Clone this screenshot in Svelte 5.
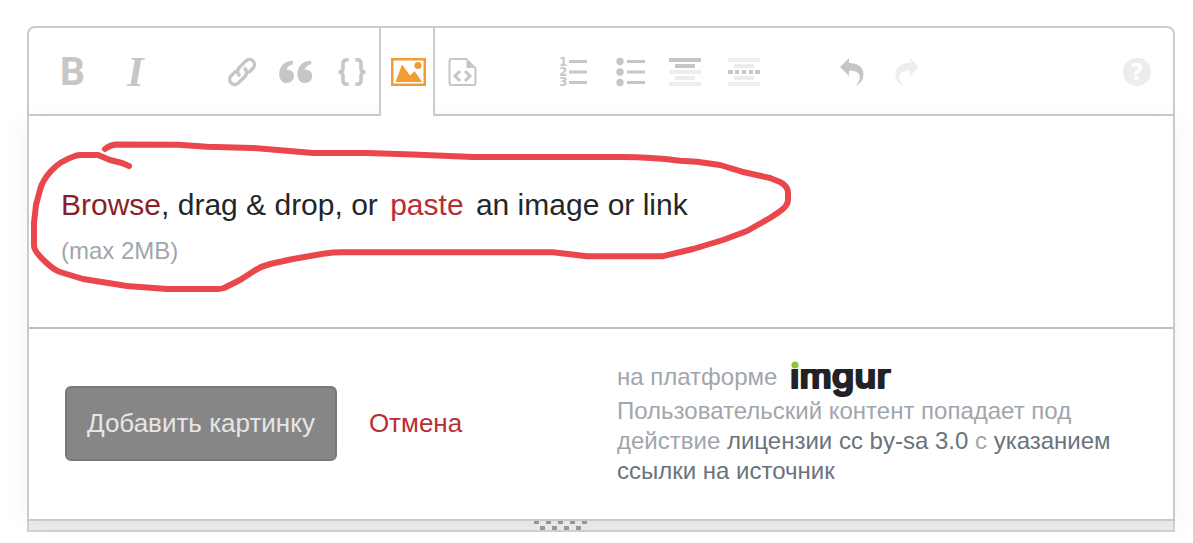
<script>
  let tab = $state('image');
  const gripTop = [0, 12, 24, 36, 48];
  const gripBottom = [6, 18, 30, 42];

  function toggle(name) {
    tab = tab === name ? '' : name;
  }
</script>

<main class="editor">
  <div class="toolbar" role="toolbar" aria-label="Форматирование">
    <div class="group text-style">
      <button aria-label="Полужирный"><span class="bold">B</span></button>
      <button aria-label="Курсив"><span class="italic">I</span></button>
    </div>

    <div class="group insert">
      <button aria-label="Ссылка">
        <svg viewBox="0 0 36 32">
          <g fill="none" stroke="currentColor" stroke-width="3.4" stroke-linecap="butt">
            <path d="M16.2 20.2C13 18 12.8 14 15.3 11.5L22 4.9c2.2-2.1 5-2.1 7 0s2 5.2 0 7.4l-4.8 4.8" />
            <path d="M20 11.8c3.2 2.2 3.4 6.2.9 8.7l-6.7 6.6c-2.2 2.1-5 2.1-7 0s-2-5.2 0-7.4l4.8-4.8" />
          </g>
        </svg>
      </button>
      <button aria-label="Цитата">
        <svg viewBox="1 0 36 32" fill="currentColor">
          <path d="M15 4.8v3.8c-3.5.3-6 2.7-6.4 5.4 4-.8 7.4 2.3 7.4 6.1 0 4-3.2 6.9-7.2 6.9-4.6 0-7.6-3.6-7.6-8.8C1.2 10.6 6.2 5 15 4.8z" />
          <path d="M33.2 4.8v3.8c-3.5.3-6 2.7-6.4 5.4 4-.8 7.4 2.3 7.4 6.1 0 4-3.2 6.9-7.2 6.9-4.6 0-7.6-3.6-7.6-8.8 0-7.6 5-13.2 13.8-13.4z" />
        </svg>
      </button>
      <button aria-label="Код">
        <svg viewBox="0 0 36 32" fill="none" stroke="currentColor" stroke-width="3.6">
          <path d="M14.500 3.800h-1.500q-4 0-4 4v4.400q0 3.800-4.500 3.800q4.500 0 4.500 3.800v4.400q0 4 4 4h1.500M21.500 3.800h1.500q4 0 4 4v4.400q0 3.800 4.500 3.800q-4.500 0-4.500 3.800v4.400q0 4-4 4h-1.500" />
        </svg>
      </button>
      <button class:active={tab === 'image'} aria-label="Изображение" onclick={() => toggle('image')}>
        <svg viewBox="0 0 36 32" fill="currentColor">
          <path fill-rule="evenodd" d="M2 2h35v28H2zM4.5 4.5v23h30v-23z" />
          <path d="M6.5 26L13 8.5l8 11 4.500-4.500 7.500 11z" />
          <circle cx="29" cy="9.5" r="3.6" />
        </svg>
      </button>
      <button aria-label="Фрагмент кода">
        <svg viewBox="0 0 36 32" fill="none" stroke="currentColor">
          <path stroke-width="2" d="M22 3H6.5q-2 0-2 2v22q0 2 2 2h22q2 0 2-2V11.5" />
          <path fill="currentColor" stroke="none" d="M21.5 2l10 10h-10z" />
          <path stroke-width="3" d="M15 15l-5 5 5 5M20 15l5 5-5 5" />
        </svg>
      </button>
    </div>

    <div class="group lists">
      <button aria-label="Нумерованный список">
        <svg viewBox="0 0 36 32" fill="currentColor">
          <g class="digits">
            <text x="3" y="10">1</text>
            <text x="3" y="20">2</text>
            <text x="3" y="30">3</text>
          </g>
          <path d="M13 4h18v3H13zM13 14.5h18v3H13zM13 25h18v3H13z" />
        </svg>
      </button>
      <button aria-label="Маркированный список">
        <svg viewBox="0 0 36 32" fill="currentColor">
          <circle cx="7" cy="5.5" r="3.7" />
          <circle cx="7" cy="16" r="3.7" />
          <circle cx="7" cy="26.5" r="3.7" />
          <path d="M14 4h18v3H14zM14 14.5h18v3H14zM14 25h18v3H14z" />
        </svg>
      </button>
      <button aria-label="Заголовок">
        <svg viewBox="3 0 36 32" fill="currentColor">
          <path d="M2 2h32v4H2zM8 8h20v4H8z" />
          <path class="faint" d="M2 14h32v4H2zM8 20h20v4H8zM2 26h32v4H2z" />
        </svg>
      </button>
      <button aria-label="Горизонтальная линия">
        <svg viewBox="1 0 36 32" fill="currentColor">
          <path d="M2 14h5v4H2zM9 14h4v4H9zM16 14h4v4h-4zM23 14h4v4h-4zM29 14h5v4h-5z" />
          <path class="faint" d="M2 2h32v4H2zM8 8h20v4H8zM8 20h20v4H8zM2 26h32v4H2z" />
        </svg>
      </button>
    </div>

    <div class="group">
      <button aria-label="Отменить">
        <svg viewBox="0 0 36 32" fill="currentColor">
          <path d="M6 11L15 2v5c9 0 14.5 4 14.5 11.5 0 5.500-3.500 10-8.500 11.500 4-3.500 5.500-7 4.500-10.500-1-3.500-4.500-5-10.500-5V20z" />
        </svg>
      </button>
      <button aria-label="Повторить" disabled>
        <svg viewBox="0 0 36 32" fill="currentColor">
          <path d="M30 11L21 2v5C12 7 6.500 11 6.500 18.500c0 5.500 3.500 10 8.500 11.500-4-3.500-5.500-7-4.500-10.500 1-3.500 4.500-5 10.500-5V20z" />
        </svg>
      </button>
    </div>

    <button class="help" aria-label="Справка">
      <svg viewBox="0 0 36 32">
        <circle cx="18" cy="16" r="14" fill="currentColor" />
        <text x="18" y="24" text-anchor="middle">?</text>
      </svg>
    </button>
  </div>

  <section class="panel">
    <div class="drop">
      <p class="lead"><a class="browse" href="#browse">Browse</a>, drag &amp; drop, or <a class="paste" href="#paste">paste</a> an image or link</p>
      <p class="limit">(max 2MB)</p>

      <!-- hand-drawn marker around the prompt -->
      <svg class="marker" viewBox="29 116 780 211" aria-hidden="true">
        <path d="M105 149Q110 145 116 144.500L178 144.700 207 146.700 253 148 313 153 367 153 413 154.500 473 157 623 157Q650 157 680 160.700L697 161.700 720 165 742 171.700 770 178 780 182Q788 186 788 193V200Q788 206 779 212L770 218 747 231 723 240 693 249 662 256.300H587L553 252.300H343Q333 252.300 323 253.700L293 259 270 264Q262 266 254 271L240 280 224 288Q221 289 218 289H167L127 286 83 279 60 272Q54 270 45 261.500 34 251 34 246V223L36 205 40 190Q42 181 51 171T75 156Q77 155 81 155H98L110 160 122 163 129 166" />
      </svg>
    </div>

    <footer>
      <div class="actions">
        <button class="submit" disabled>Добавить картинку</button>
        <a class="cancel" href="#cancel">Отмена</a>
      </div>
      <div class="legal">
        <div class="powered">
          <span>на платформе</span>
          <svg class="imgur" viewBox="0 0 104 35" role="img" aria-label="imgur">
            <clipPath id="below-dot"><rect x="-4" y="8" width="112" height="36" /></clipPath>
            <text x="-1" y="27" clip-path="url(#below-dot)">imgur</text>
            <circle cx="4" cy="4" r="3.6" />
          </svg>
        </div>
        <p>Пользовательский контент попадает под действие <a href="#license">лицензии cc by-sa 3.0</a> с <a href="#attribution">указанием ссылки на источник</a></p>
      </div>
    </footer>
  </section>

  <div class="resize">
    <svg viewBox="0 0 54 9" aria-hidden="true">
      {#each gripTop as x}
        <rect {x} y="0" width="5" height="3" />
      {/each}
      {#each gripBottom as x}
        <rect {x} y="5" width="5" height="4" />
      {/each}
    </svg>
  </div>
</main>

<style>
  :global(body) {
    margin: 0;
    background: #fff;
    overflow-x: hidden;
  }

  .editor {
    margin: 26px 18px 0 27px;
    font-family: "Liberation Sans", Arial, sans-serif;
    color: #242729;
  }

  p { margin: 0; }
  a { text-decoration: none; }

  button {
    border: 0;
    padding: 0;
    background: none;
    font-family: inherit;
  }

  .toolbar {
    display: flex;
    gap: 51px;
    height: 86px;
    padding-left: 16px;
    border: 2px solid #c8ccd0;
    border-radius: 8px 8px 0 0;
  }

  .group { display: flex; }
  .text-style { gap: 8px; }
  .lists { padding-left: 4px; }

  .toolbar button {
    display: flex;
    align-items: center;
    justify-content: center;
    box-sizing: border-box;
    width: 55px;
    height: 88px;
    color: #c6c6c6;
  }

  .toolbar .lists button { width: 57px; }

  .toolbar svg {
    flex: none;
    width: 36px;
    height: 32px;
    overflow: visible;
  }

  .toolbar .active {
    position: relative;
    z-index: 1;
    width: 56px;
    border: 2px solid #c8ccd0;
    border-width: 0 2px;
    border-radius: 0 0 2px 2px;
    background: #fff;
    color: #f09d36;
  }

  .toolbar button:disabled { color: #ededed; }
  .faint { fill: #ededed; }

  .bold {
    font: 700 39px/40px Roboto, sans-serif;
  }

  .italic {
    font: italic 700 42px/40px "Liberation Serif", serif;
  }

  .digits {
    font: 700 12px "DejaVu Sans", sans-serif;
  }

  .toolbar .help {
    margin-left: auto;
    margin-right: 9px;
    color: #ededed;
  }

  .help text {
    font: 700 23px "DejaVu Sans", sans-serif;
    fill: #fff;
  }

  .panel {
    position: relative;
    border: 2px solid #c8ccd0;
    border-top: 0;
    box-shadow: 0 4px 26px rgba(0, 0, 0, 0.05);
  }

  .drop {
    position: relative;
    padding: 71px 32px 61px;
    border-bottom: 2px solid #bbc0c4;
  }

  .lead {
    font-size: 30px;
    line-height: 36px;
  }

  .browse { color: #8a1f26; }

  .paste {
    margin: 0 4px;
    color: #b92e34;
  }

  .limit {
    margin-top: 13px;
    font-size: 24px;
    line-height: 30px;
    color: #9fa6ad;
  }

  .marker {
    position: absolute;
    top: 0;
    left: 0;
    width: 780px;
    height: 211px;
    pointer-events: none;
    fill: none;
    stroke: #e9474b;
    stroke-width: 6;
    stroke-linecap: round;
    stroke-linejoin: round;
  }

  footer {
    display: flex;
    align-items: center;
    justify-content: space-between;
    padding: 32px 36px 33px;
  }

  .actions {
    display: flex;
    align-items: center;
    gap: 32px;
    font-size: 26px;
  }

  .submit {
    height: 75px;
    padding: 0 20px;
    border: 2px solid #797979;
    border-radius: 6px;
    background: #868686;
    color: #e6e6e6;
    font-size: 26px;
  }

  .cancel { color: #b92e34; }

  .legal {
    width: 520px;
    font-size: 24px;
    line-height: 30px;
    color: #9fa6ad;
  }

  .legal a { color: #6a737c; }

  .powered {
    display: flex;
    gap: 14px;
    line-height: 32px;
  }

  .imgur {
    width: 104px;
    height: 35px;
    overflow: visible;
  }

  .imgur text {
    font: 600 36px Inter, sans-serif;
    fill: #222226;
    stroke: #222226;
    stroke-width: 2;
    stroke-linejoin: round;
  }

  .imgur circle { fill: #8bc53f; }

  .resize {
    height: 9px;
    padding-left: 44%;
    border: 2px solid #d0d3d6;
    border-top: 0;
    background: #ebedef;
  }

  .resize svg {
    display: block;
    width: 54px;
    height: 9px;
    fill: #999;
  }
</style>
